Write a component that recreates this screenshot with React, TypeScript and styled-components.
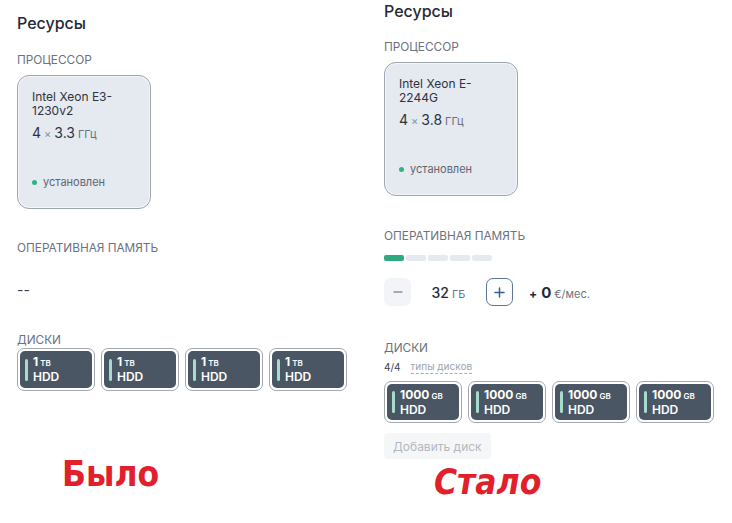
import React from 'react';
import styled, { createGlobalStyle } from 'styled-components';

const GlobalStyle = createGlobalStyle`
  html, body {
    margin: 0;
    padding: 0;
    background: #ffffff;
  }
  body {
    font-family: Inter, "Noto Sans", "DejaVu Sans", sans-serif;
    color: #1f2937;
  }
`;

const Page = styled.div`
  display: flex;
  width: 732px;
  height: 523px;
  padding-left: 17px;
  box-sizing: border-box;
  overflow: hidden;
`;

const Column = styled.div<{ $top: number; $width?: number }>`
  display: flex;
  flex-direction: column;
  align-items: flex-start;
  padding-top: ${(p) => p.$top}px;
  width: ${(p) => (p.$width ? `${p.$width}px` : 'auto')};
  flex-shrink: 0;
`;

const Title = styled.h2`
  margin: 0;
  font-size: 16px;
  line-height: 20px;
  font-weight: 500;
  color: #1f2937;
`;

const Label = styled.div<{ $gap: number }>`
  margin-top: ${(p) => p.$gap}px;
  font-size: 11.8px;
  line-height: 14px;
  font-weight: 400;
  text-transform: uppercase;
  color: #6b7280;
`;

/* --- CPU card --- */

const CpuCard = styled.div<{ $gap: number }>`
  margin-top: ${(p) => p.$gap}px;
  width: 134px;
  height: 134px;
  box-sizing: border-box;
  border: 1px solid #9ea6af;
  border-radius: 12px;
  box-shadow: inset 0 0 0 1px #f4f6f9;
  background: #e5e9f0;
  padding: 14px 13px 19px 14px;
  display: flex;
  flex-direction: column;
`;

const CpuName = styled.div`
  font-size: 12px;
  line-height: 14px;
  color: #2d3440;
`;

const CpuSpec = styled.div`
  margin-top: 6px;
  font-size: 14px;
  line-height: 18px;
  color: #2d3440;
  display: flex;
  align-items: baseline;
  gap: 3px;
`;

const Times = styled.span`
  font-size: 11px;
  color: #8a919b;
`;

const Unit = styled.span<{ $size?: number }>`
  font-size: ${(p) => p.$size ?? 11}px;
  font-weight: 400;
  color: #6b7280;
`;

const Status = styled.div`
  margin-top: auto;
  display: flex;
  align-items: center;
  gap: 6px;
  font-size: 11px;
  line-height: 14px;
  color: #5f6670;
`;

const Dot = styled.span`
  width: 5px;
  height: 5px;
  border-radius: 50%;
  background: #2fb384;
`;

/* --- RAM --- */

const Empty = styled.div<{ $gap: number }>`
  margin-top: ${(p) => p.$gap}px;
  font-size: 14px;
  line-height: 18px;
  color: #374151;
`;

const Meter = styled.div<{ $gap: number }>`
  margin-top: ${(p) => p.$gap}px;
  display: flex;
  gap: 2px;
`;

const Segment = styled.span<{ $on: boolean }>`
  width: 20px;
  height: 6px;
  border-radius: 2px;
  background: ${(p) => (p.$on ? '#2eaa7f' : '#e6e9ee')};
`;

const Stepper = styled.div<{ $gap: number }>`
  margin-top: ${(p) => p.$gap}px;
  display: flex;
  align-items: center;
`;

const StepButton = styled.button<{ $active: boolean }>`
  width: 27px;
  height: 28px;
  padding: 0;
  box-sizing: border-box;
  border-radius: 7px;
  border: 1px solid ${(p) => (p.$active ? '#5d7597' : 'transparent')};
  background: ${(p) => (p.$active ? '#ffffff' : '#f3f4f7')};
  color: ${(p) => (p.$active ? '#3d5d8c' : '#8d939c')};
  display: flex;
  align-items: center;
  justify-content: center;
  cursor: pointer;
`;

const StepValue = styled.div`
  width: 75px;
  display: flex;
  justify-content: center;
  align-items: baseline;
  gap: 3px;
  font-size: 14px;
  font-weight: 500;
  color: #1f2937;
`;

const Price = styled.div`
  margin-left: 16px;
  display: flex;
  align-items: baseline;
  gap: 3px;
  font-size: 11px;
  color: #6b7280;
`;

const PriceNum = styled.span`
  font-size: 15px;
  font-weight: 700;
  color: #1f2937;
`;

const PricePlus = styled.span`
  font-size: 12px;
  font-weight: 700;
  color: #1f2937;
  margin-right: 1px;
`;

/* --- disks --- */

const DiskMeta = styled.div<{ $gap: number }>`
  margin-top: ${(p) => p.$gap}px;
  display: flex;
  gap: 10px;
  font-size: 10px;
  line-height: 13px;
  color: #374151;
`;

const DiskTypes = styled.span`
  color: #9ca3af;
  border-bottom: 1px dashed #a8aeb6;
  line-height: 11px;
`;

const DiskRow = styled.div<{ $gap: number }>`
  margin-top: ${(p) => p.$gap}px;
  display: flex;
  gap: 6px;
`;

const Disk = styled.div<{ $height: number }>`
  width: 78px;
  height: ${(p) => p.$height}px;
  box-sizing: border-box;
  border: 1px solid #a1a8b1;
  border-radius: 7px;
  padding: 2px;
  background: #ffffff;
`;

const DiskBody = styled.div`
  height: 100%;
  border-radius: 5px;
  background: #4b5664;
  display: flex;
  align-items: center;
  padding-left: 5px;
  gap: 5px;
`;

const DiskStripe = styled.span`
  width: 3px;
  height: 22px;
  border-radius: 2px;
  background: #a6dccb;
`;

const DiskText = styled.div`
  display: flex;
  flex-direction: column;
  color: #ffffff;
  font-weight: 700;
`;

const DiskSize = styled.div`
  font-size: 12px;
  line-height: 14px;
  display: flex;
  align-items: baseline;
  gap: 2px;
`;

const DiskUnit = styled.span`
  font-size: 8px;
  font-weight: 600;
`;

const DiskKind = styled.div`
  font-size: 12px;
  line-height: 14px;
  font-weight: 600;
`;

const AddDisk = styled.button<{ $gap: number }>`
  margin-top: ${(p) => p.$gap}px;
  height: 26px;
  padding: 0 9px;
  border: none;
  border-radius: 4px;
  background: #f5f6f8;
  color: #b3b8bf;
  font-family: inherit;
  font-size: 12px;
`;

/* --- captions --- */

const Caption = styled.div<{ $gap: number; $left: number; $slant?: boolean }>`
  margin-top: ${(p) => p.$gap}px;
  margin-left: ${(p) => p.$left}px;
  font-family: "DejaVu Sans Condensed", "DejaVu Sans", sans-serif;
  font-weight: 700;
  font-size: 35px;
  line-height: 38px;
  color: #e2202b;
  font-style: ${(p) => (p.$slant ? 'oblique 8deg' : 'normal')};
`;

const Minus = () => (
  <svg width="10" height="10" viewBox="0 0 10 10">
    <path d="M1 5h8" stroke="currentColor" strokeWidth="1.3" strokeLinecap="round" />
  </svg>
);

const Plus = () => (
  <svg width="11" height="11" viewBox="0 0 11 11">
    <path d="M5.5 1v9M1 5.5h9" stroke="currentColor" strokeWidth="1.5" strokeLinecap="round" />
  </svg>
);

type Cpu = { name: string[]; cores: number; freq: string };

const CpuBlock = ({ cpu, gap }: { cpu: Cpu; gap: number }) => (
  <CpuCard $gap={gap}>
    <CpuName>
      {cpu.name.map((line) => (
        <div key={line}>{line}</div>
      ))}
    </CpuName>
    <CpuSpec>
      {cpu.cores}
      <Times>×</Times>
      {cpu.freq}
      <Unit>ГГц</Unit>
    </CpuSpec>
    <Status>
      <Dot />
      установлен
    </Status>
  </CpuCard>
);

const DiskTile = ({ size, unit, height }: { size: string; unit: string; height: number }) => (
  <Disk $height={height}>
    <DiskBody>
      <DiskStripe />
      <DiskText>
        <DiskSize>
          {size}
          <DiskUnit>{unit}</DiskUnit>
        </DiskSize>
        <DiskKind>HDD</DiskKind>
      </DiskText>
    </DiskBody>
  </Disk>
);

const disks = [0, 1, 2, 3];
const ramSteps = [true, false, false, false, false];

const App: React.FC = () => {
  return (
    <>
      <GlobalStyle />
      <Page>
        {/* до */}
        <Column $top={13} $width={367}>
          <Title>Ресурсы</Title>
          <Label $gap={20}>Процессор</Label>
          <CpuBlock gap={8} cpu={{ name: ['Intel Xeon E3-', '1230v2'], cores: 4, freq: '3.3' }} />

          <Label $gap={32}>Оперативная память</Label>
          <Empty $gap={26}>--</Empty>

          <Label $gap={34}>Диски</Label>
          <DiskRow $gap={1}>
            {disks.map((d) => (
              <DiskTile key={d} size="1" unit="ТВ" height={43} />
            ))}
          </DiskRow>

          <Caption $gap={64} $left={45}>Было</Caption>
        </Column>

        {/* после */}
        <Column $top={1}>
          <Title>Ресурсы</Title>
          <Label $gap={19}>Процессор</Label>
          <CpuBlock gap={8} cpu={{ name: ['Intel Xeon E-', '2244G'], cores: 4, freq: '3.8' }} />

          <Label $gap={33}>Оперативная память</Label>
          <Meter $gap={12}>
            {ramSteps.map((on, i) => (
              <Segment key={i} $on={on} />
            ))}
          </Meter>
          <Stepper $gap={17}>
            <StepButton $active={false}>
              <Minus />
            </StepButton>
            <StepValue>
              32<Unit $size={11}>ГБ</Unit>
            </StepValue>
            <StepButton $active>
              <Plus />
            </StepButton>
            <Price>
              <PricePlus>+</PricePlus>
              <PriceNum>0</PriceNum>
              €/мес.
            </Price>
          </Stepper>

          <Label $gap={35}>Диски</Label>
          <DiskMeta $gap={6}>
            <span>4/4</span>
            <DiskTypes>типы дисков</DiskTypes>
          </DiskMeta>
          <DiskRow $gap={7}>
            {disks.map((d) => (
              <DiskTile key={d} size="1000" unit="GB" height={42} />
            ))}
          </DiskRow>
          <AddDisk $gap={10}>Добавить диск</AddDisk>

          <Caption $gap={4} $left={50} $slant>Стало</Caption>
        </Column>
      </Page>
    </>
  );
};

export default App;
